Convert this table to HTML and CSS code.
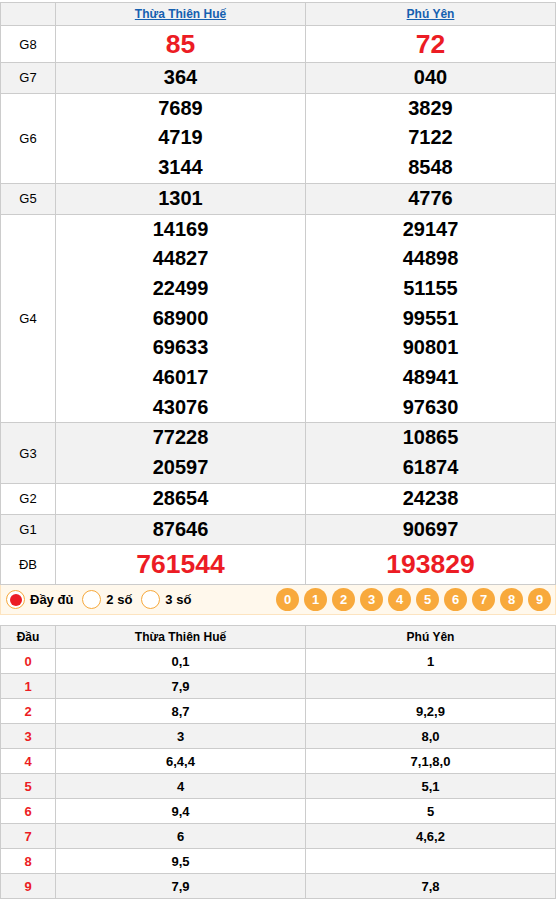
FILE: index.html
```html
<!DOCTYPE html>
<html lang="vi">
<head>
<meta charset="utf-8">
<title>XSMT</title>
<link rel="stylesheet" href="styles.css">
</head>
<body>
<table class="kq">
  <colgroup><col class="c-lbl"><col class="c-prov"><col></colgroup>
  <tr class="hdr">
    <td></td>
    <td><a href="#" class="prov">Thừa Thiên Huế</a></td>
    <td><a href="#" class="prov">Phú Yên</a></td>
  </tr>
  <tr class="g8">
    <td class="lbl">G8</td>
    <td><div class="n red">85</div></td>
    <td><div class="n red">72</div></td>
  </tr>
  <tr class="alt">
    <td class="lbl">G7</td>
    <td><div class="n">364</div></td>
    <td><div class="n">040</div></td>
  </tr>
  <tr>
    <td class="lbl">G6</td>
    <td><div class="n">7689</div><div class="n">4719</div><div class="n">3144</div></td>
    <td><div class="n">3829</div><div class="n">7122</div><div class="n">8548</div></td>
  </tr>
  <tr class="alt">
    <td class="lbl">G5</td>
    <td><div class="n">1301</div></td>
    <td><div class="n">4776</div></td>
  </tr>
  <tr>
    <td class="lbl">G4</td>
    <td><div class="n">14169</div><div class="n">44827</div><div class="n">22499</div><div class="n">68900</div><div class="n">69633</div><div class="n">46017</div><div class="n">43076</div></td>
    <td><div class="n">29147</div><div class="n">44898</div><div class="n">51155</div><div class="n">99551</div><div class="n">90801</div><div class="n">48941</div><div class="n">97630</div></td>
  </tr>
  <tr class="alt">
    <td class="lbl">G3</td>
    <td><div class="n">77228</div><div class="n">20597</div></td>
    <td><div class="n">10865</div><div class="n">61874</div></td>
  </tr>
  <tr>
    <td class="lbl">G2</td>
    <td><div class="n">28654</div></td>
    <td><div class="n">24238</div></td>
  </tr>
  <tr class="alt">
    <td class="lbl">G1</td>
    <td><div class="n">87646</div></td>
    <td><div class="n">90697</div></td>
  </tr>
  <tr class="db">
    <td class="lbl">ĐB</td>
    <td><div class="n red">761544</div></td>
    <td><div class="n red">193829</div></td>
  </tr>
</table>

<div class="bar">
  <div class="opts">
    <label class="opt"><span class="radio on"></span>Đầy đủ</label>
    <label class="opt"><span class="radio"></span>2 số</label>
    <label class="opt"><span class="radio"></span>3 số</label>
  </div>
  <div class="balls">
    <span class="ball">0</span><span class="ball">1</span><span class="ball">2</span><span class="ball">3</span><span class="ball">4</span><span class="ball">5</span><span class="ball">6</span><span class="ball">7</span><span class="ball">8</span><span class="ball">9</span>
  </div>
</div>

<table class="lt">
  <colgroup><col class="c-lbl"><col class="c-prov"><col></colgroup>
  <tr class="hdr"><td>Đầu</td><td>Thừa Thiên Huế</td><td>Phú Yên</td></tr>
  <tr><td class="d">0</td><td>0,1</td><td>1</td></tr>
  <tr class="alt"><td class="d">1</td><td>7,9</td><td></td></tr>
  <tr><td class="d">2</td><td>8,7</td><td>9,2,9</td></tr>
  <tr class="alt"><td class="d">3</td><td>3</td><td>8,0</td></tr>
  <tr><td class="d">4</td><td>6,4,4</td><td>7,1,8,0</td></tr>
  <tr class="alt"><td class="d">5</td><td>4</td><td>5,1</td></tr>
  <tr><td class="d">6</td><td>9,4</td><td>5</td></tr>
  <tr class="alt"><td class="d">7</td><td>6</td><td>4,6,2</td></tr>
  <tr><td class="d">8</td><td>9,5</td><td></td></tr>
  <tr class="alt"><td class="d">9</td><td>7,9</td><td>7,8</td></tr>
</table>
</body>
</html>
```

FILE: styles.css
```css
html, body {
  margin: 0;
  padding: 0;
  background: #fff;
}
body {
  padding-top: 2px;
  font-family: "Liberation Sans", Arial, sans-serif;
  color: #000;
}
table {
  border-collapse: collapse;
  table-layout: fixed;
  width: 556px;
}
col.c-lbl { width: 55px; }
col.c-prov { width: 250px; }
td {
  border: 1px solid #cccccc;
  padding: 0;
  text-align: center;
  vertical-align: middle;
}
.alt td, .hdr td { background: #f2f2f2; }

.kq .hdr td {
  height: 22px;
  line-height: 22px;
  font-size: 12px;
  font-weight: bold;
}
.prov {
  color: #1560b0;
  text-decoration: underline;
}
.kq .lbl {
  font-size: 13px;
}
.n {
  font-size: 20px;
  line-height: 29.7px;
  font-weight: bold;
}
.g8 .n {
  font-size: 26.5px;
  line-height: 36px;
}
.db .n {
  font-size: 26.5px;
  line-height: 39px;
}
.red { color: #ec1c24; }

.bar {
  width: 556px;
  box-sizing: border-box;
  height: 30px;
  background: #fff8ec;
  border: 1px solid #fde4c0;
  border-top: none;
  display: flex;
  align-items: center;
  justify-content: space-between;
  padding: 0 4px 0 5px;
  margin-bottom: 10px;
}
.opts {
  display: flex;
  align-items: center;
}
.opt {
  display: flex;
  align-items: center;
  font-size: 13px;
  font-weight: bold;
  margin-right: 9px;
}
.radio {
  width: 17px;
  height: 17px;
  border: 1px solid #f6a83b;
  border-radius: 50%;
  background: #fff;
  margin-right: 5px;
  display: flex;
  align-items: center;
  justify-content: center;
}
.radio.on::after {
  content: "";
  width: 12px;
  height: 12px;
  border-radius: 50%;
  background: #ec1c24;
}
.balls {
  display: flex;
  gap: 5px;
}
.ball {
  width: 23px;
  height: 23px;
  border-radius: 50%;
  background: #f8a93c;
  color: #fff;
  font-size: 13px;
  font-weight: bold;
  display: flex;
  align-items: center;
  justify-content: center;
}

.lt td {
  height: 24px;
  font-size: 13px;
  font-weight: bold;
}
.lt .hdr td {
  height: 22px;
  font-size: 12px;
}
.lt .d {
  color: #ec1c24;
  font-size: 13px;
}
```
